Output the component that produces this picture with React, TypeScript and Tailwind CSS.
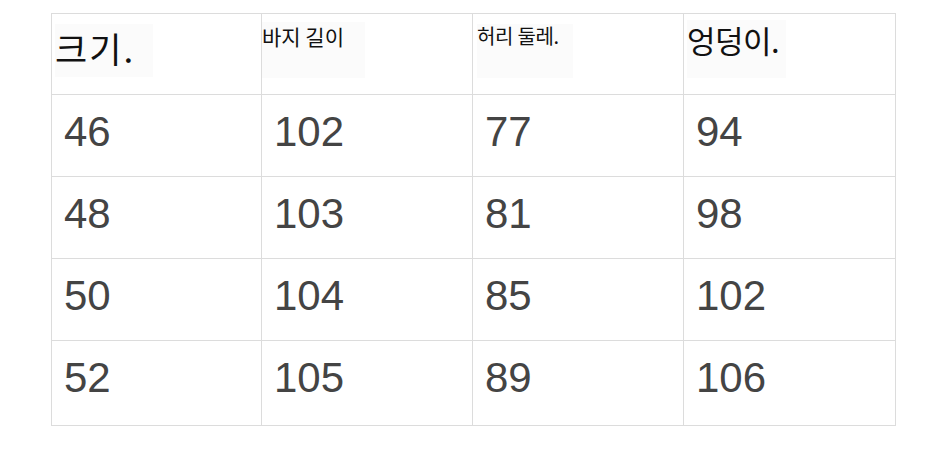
import React from "react";

const rows = [
  ["46", "102", "77", "94"],
  ["48", "103", "81", "98"],
  ["50", "104", "85", "102"],
  ["52", "105", "89", "106"],
];

const widths = ["w-[210px]", "w-[211px]", "w-[211px]", "w-[211px]"];
const kr = { fontFamily: '"Noto Sans CJK KR", "Noto Sans", sans-serif' };
const num = { fontFamily: '"Liberation Sans", Arial, sans-serif' };

export default function App() {
  return (
    <div className="w-[950px] h-[462px] bg-white pt-[13px] pl-[51px]">
      <div className="w-[845px] border border-[#dcdcdc] flex flex-col">
        {/* header */}
        <div className="flex h-[81px] border-b border-[#dcdcdc]">
          <div className={`${widths[0]} border-r border-[#dcdcdc] pl-[3px] pt-[10px]`}>
            <div className="w-[98px] h-[53px] bg-[#fbfbfb] pt-[2px]">
              <span className="block text-[35px] leading-[44px] text-[#111] tracking-[2px]" style={kr}>크기.</span>
            </div>
          </div>
          <div className={`${widths[1]} border-r border-[#dcdcdc] pt-[8px]`}>
            <div className="w-[103px] h-[56px] bg-[#fbfbfb] pt-[1px]">
              <span className="block text-[21px] leading-[26px] text-[#111] tracking-[0px]" style={kr}>바지 길이</span>
            </div>
          </div>
          <div className={`${widths[2]} border-r border-[#dcdcdc] pl-[4px] pt-[10px]`}>
            <div className="w-[96px] h-[54px] bg-[#fbfbfb]">
              <span className="block text-[20px] leading-[24px] text-[#111] tracking-[-0.3px]" style={kr}>허리 둘레.</span>
            </div>
          </div>
          <div className={`${widths[3]} pl-[3px] pt-[6px]`}>
            <div className="w-[99px] h-[58px] bg-[#fbfbfb]">
              <span className="block text-[31px] leading-[40px] text-[#111] tracking-[-0.5px]" style={kr}>엉덩이.</span>
            </div>
          </div>
        </div>
        {rows.map((r, i) => (
          <div
            key={i}
            className={`flex ${i === rows.length - 1 ? "h-[84px]" : "h-[82px] border-b border-[#dcdcdc]"}`}
          >
            {r.map((v, j) => (
              <div
                key={j}
                className={`${widths[j]} ${j < 3 ? "border-r border-[#dcdcdc]" : ""} pl-[12px] pt-[15px]`}
              >
                <span className="block text-[42px] leading-[43px] text-[#444]" style={num}>
                  {v}
                </span>
              </div>
            ))}
          </div>
        ))}
      </div>
    </div>
  );
}
